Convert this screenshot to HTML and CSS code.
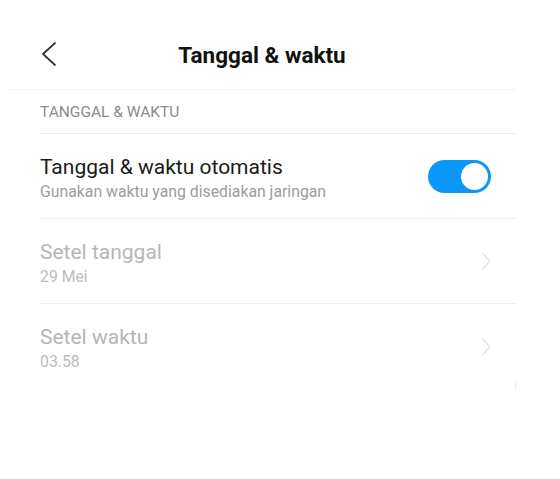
FILE: index.html
```html
<!DOCTYPE html>
<html>
<head>
<meta charset="utf-8">
<link rel="stylesheet" href="styles.css">
</head>
<body>
<div class="page">
  <header class="topbar">
    <span class="back">
      <svg width="16" height="26" viewBox="0 0 16 26"><path d="M14 2 L2 13 L14 24" fill="none" stroke="#333" stroke-width="1.7" stroke-linecap="round" stroke-linejoin="round"/></svg>
    </span>
    <h1 class="title">Tanggal &amp; waktu</h1>
  </header>
  <div class="list">
    <div class="section-head">TANGGAL &amp; WAKTU</div>
    <div class="row">
      <div class="texts">
        <div class="main">Tanggal &amp; waktu otomatis</div>
        <div class="sub">Gunakan waktu yang disediakan jaringan</div>
      </div>
      <div class="toggle"><span class="knob"></span></div>
    </div>
    <div class="row disabled">
      <div class="texts">
        <div class="main">Setel tanggal</div>
        <div class="sub">29 Mei</div>
      </div>
      <svg class="chev" width="11" height="18" viewBox="0 0 11 18"><path d="M2 1.5 L9 9 L2 16.5" fill="none" stroke="#e4e4e4" stroke-width="1.4" stroke-linecap="round" stroke-linejoin="round"/></svg>
    </div>
    <div class="row disabled last">
      <div class="texts">
        <div class="main">Setel waktu</div>
        <div class="sub">03.58</div>
      </div>
      <svg class="chev" width="11" height="18" viewBox="0 0 11 18"><path d="M2 1.5 L9 9 L2 16.5" fill="none" stroke="#e4e4e4" stroke-width="1.4" stroke-linecap="round" stroke-linejoin="round"/></svg>
    </div>
  </div>
  <span class="scroll-mark"></span>
</div>
</body>
</html>
```
FILE: styles.css
```css
html, body {
  margin: 0;
  padding: 0;
  background: #ffffff;
}
body {
  font-family: Roboto, "Noto Sans", sans-serif;
  color: #1a1a1a;
}
.page {
  position: relative;
  width: 508px;
  margin-left: 8px;
}
.topbar {
  position: relative;
  height: 90px;
  box-sizing: border-box;
  border-bottom: 1px solid #f2f2f2;
  display: flex;
  justify-content: center;
  align-items: flex-start;
  padding-top: 42px;
}
.back {
  position: absolute;
  left: 33px;
  top: 41px;
  display: block;
  line-height: 0;
}
.title {
  margin: 0;
  font-size: 22.5px;
  line-height: 26px;
  font-weight: 700;
  color: #111;
}
.list {
  padding-left: 32px;
}
.section-head {
  height: 44px;
  box-sizing: border-box;
  padding-top: 13px;
  font-size: 15.5px;
  line-height: 18px;
  color: #8c8c8c;
  border-bottom: 1px solid #eeeeee;
}
.row {
  height: 85px;
  box-sizing: border-box;
  border-bottom: 1px solid #efefef;
  display: flex;
  align-items: center;
  justify-content: space-between;
  padding-right: 25px;
}
.row.last {
  border-bottom: none;
}
.texts {
  display: flex;
  flex-direction: column;
  padding-top: 4px;
}
.main {
  font-size: 21px;
  line-height: 24px;
  color: #1a1a1a;
}
.sub {
  font-size: 15.8px;
  line-height: 20px;
  color: #9c9c9c;
  margin-top: 3px;
}
.disabled .main {
  color: #b6b6b6;
}
.disabled .sub {
  color: #bcbcbc;
}
.toggle {
  width: 63px;
  height: 33px;
  border-radius: 17px;
  background: #0c97fa;
  position: relative;
}
.knob {
  position: absolute;
  right: 3px;
  top: 3px;
  width: 27px;
  height: 27px;
  border-radius: 50%;
  background: #fff;
}
.chev {
  display: block;
  margin-right: -1px;
}
.scroll-mark {
  position: absolute;
  left: 507px;
  top: 382px;
  width: 1px;
  height: 18px;
  background: #e8e8e8;
}
```
